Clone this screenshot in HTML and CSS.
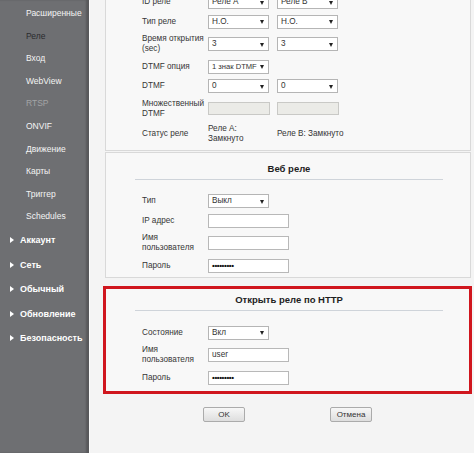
FILE: index.html
```html
<!DOCTYPE html>
<html lang="ru">
<head>
<meta charset="utf-8">
<title>Реле</title>
<link rel="stylesheet" href="styles.css">
</head>
<body>
<div class="page">
  <nav class="sidebar">
    <div class="sub">Расширенные</div>
    <div class="sub active">Реле</div>
    <div class="sub">Вход</div>
    <div class="sub">WebView</div>
    <div class="sub disabled">RTSP</div>
    <div class="sub">ONVIF</div>
    <div class="sub">Движение</div>
    <div class="sub">Карты</div>
    <div class="sub">Триггер</div>
    <div class="sub">Schedules</div>
    <div class="sec">Аккаунт</div>
    <div class="sec">Сеть</div>
    <div class="sec">Обычный</div>
    <div class="sec">Обновление</div>
    <div class="sec">Безопасность</div>
  </nav>
  <main class="main">
    <section class="panel panel-first">
      <div class="form">
        <div class="lbl">ID реле</div>
        <div class="sel"><span>Реле А</span></div>
        <div class="sel"><span>Реле В</span></div>

        <div class="lbl">Тип реле</div>
        <div class="sel"><span>Н.О.</span></div>
        <div class="sel"><span>Н.О.</span></div>

        <div class="lbl two">Время открытия<br>(sec)</div>
        <div class="sel"><span>3</span></div>
        <div class="sel"><span>3</span></div>

        <div class="lbl">DTMF опция</div>
        <div class="sel"><span class="tight">1 знак DTMF</span></div>
        <div></div>

        <div class="lbl">DTMF</div>
        <div class="sel"><span>0</span></div>
        <div class="sel"><span>0</span></div>

        <div class="lbl two">Множественный<br>DTMF</div>
        <div class="inp disabled"></div>
        <div class="inp disabled"></div>

        <div class="lbl two">Статус реле</div>
        <div class="lbl two">Реле А:<br>Замкнуто</div>
        <div class="lbl">Реле В: Замкнуто</div>
      </div>
    </section>

    <section class="panel panel-web">
      <h2 class="head">Веб реле</h2>
      <div class="form form-web">
        <div class="lbl">Тип</div>
        <div class="sel"><span>Выкл</span></div>

        <div class="lbl">IP адрес</div>
        <div class="inp"></div>

        <div class="lbl two">Имя<br>пользователя</div>
        <div class="inp"></div>

        <div class="lbl">Пароль</div>
        <div class="inp pw">•••••••••</div>
      </div>
    </section>

    <section class="panel panel-http">
      <h2 class="head">Открыть реле по HTTP</h2>
      <div class="form form-http">
        <div class="lbl">Состояние</div>
        <div class="sel"><span>Вкл</span></div>

        <div class="lbl two">Имя<br>пользователя</div>
        <div class="inp">user</div>

        <div class="lbl">Пароль</div>
        <div class="inp pw">•••••••••</div>
      </div>
    </section>

    <div class="buttons">
      <button class="btn" type="button">OK</button>
      <button class="btn" type="button">Отмена</button>
    </div>
  </main>
</div>
</body>
</html>
```

FILE: styles.css
```css
* { box-sizing: border-box; }

body {
  margin: 0;
  font-family: "Liberation Sans", Arial, sans-serif;
}

.page {
  display: flex;
  width: 474px;
  height: 453px;
  overflow: hidden;
  background: #f4f4f4;
}

/* ---------- sidebar ---------- */
.sidebar {
  width: 89px;
  flex: none;
  background: #6e6f72;
  box-shadow: inset -3px 0 2px rgba(0, 0, 0, 0.2);
  padding-top: 2px;
}

.sub {
  height: 22.6px;
  line-height: 22.6px;
  padding-left: 26px;
  font-size: 8.5px;
  color: #f4f4f4;
  white-space: nowrap;
}

.sub.active { color: #2a2b2e; }
.sub.disabled { color: #a3a4a6; }

.sec {
  height: 24.5px;
  display: flex;
  align-items: center;
  gap: 6px;
  padding-left: 10px;
  font-size: 9px;
  font-weight: bold;
  color: #ffffff;
  white-space: nowrap;
}

.sec::before {
  content: "";
  width: 0;
  height: 0;
  border-left: 4px solid #ffffff;
  border-top: 3px solid transparent;
  border-bottom: 3px solid transparent;
}

/* ---------- main ---------- */
.main {
  flex: 1;
  min-width: 0;
  border-left: 1px solid #fbfbfb;
  padding: 0 2px 0 13px;
  background: #f4f4f4;
}

.panel {
  margin: 0 1px 0 2px;
  border: 1px solid #d9d9d9;
  background: #f8f8f8;
}

.panel-first {
  margin-top: -14px;
  padding: 8px 0 6px 36px;
}

.panel-web {
  margin-top: 1px;
  padding: 0 0 4px 0;
}

.panel-http {
  margin: 8px 0 0 0;
  border: 3px solid #d0161e;
  padding: 0 0 6px 0;
}

.head {
  margin: 0 27px 0 29px;
  padding: 10px 0 4px;
  border-bottom: 1px solid #cfd4da;
  text-align: center;
  font-size: 9.5px;
  line-height: 12px;
  font-weight: bold;
  color: #1e1e1e;
}

.panel-http .head {
  margin: 0 26px 0 29px;
  padding-top: 5px;
}

.form {
  display: grid;
  grid-template-columns: 66px 69px 1fr;
  row-gap: 5.5px;
  align-items: center;
}

.form-web,
.form-http {
  grid-template-columns: 66px 1fr;
  padding-left: 36px;
}

.form-web { margin-top: 14px; }
.form-http { margin-top: 15px; }

.lbl {
  font-size: 8.2px;
  line-height: 10px;
  color: #363636;
  min-height: 14px;
  display: flex;
  align-items: center;
  white-space: nowrap;
}

.lbl.two { min-height: 20px; }

/* fake select */
.sel {
  position: relative;
  width: 61px;
  height: 14px;
  border: 1px solid #b5b5b5;
  background: #ffffff;
  font-size: 8.2px;
  line-height: 12px;
  padding-left: 3px;
  color: #333333;
  white-space: nowrap;
}

.sel .tight { font-size: 7.6px; }

.sel::after {
  content: "";
  position: absolute;
  right: 4px;
  top: 4.5px;
  border-top: 4px solid #222222;
  border-left: 2px solid transparent;
  border-right: 2px solid transparent;
}

/* fake input */
.inp {
  width: 81px;
  height: 14px;
  border: 1px solid #b8b8b8;
  background: #ffffff;
  font-size: 8.2px;
  line-height: 12px;
  padding-left: 3px;
  color: #333333;
}

.inp.disabled {
  width: 62px;
  height: 13px;
  background: #ebebe7;
  border-color: #c9c9c6;
}

.inp.pw {
  font-size: 8px;
  font-weight: bold;
  letter-spacing: -0.4px;
  color: #111111;
}

/* buttons */
.buttons {
  display: flex;
  justify-content: center;
  gap: 85px;
  margin-top: 13px;
}

.btn {
  width: 42px;
  height: 15px;
  padding: 0;
  border: 1px solid #ababab;
  border-radius: 2px;
  background: linear-gradient(#f7f7f7, #dedede);
  font-family: "Liberation Sans", Arial, sans-serif;
  font-size: 8px;
  color: #333333;
}
```
